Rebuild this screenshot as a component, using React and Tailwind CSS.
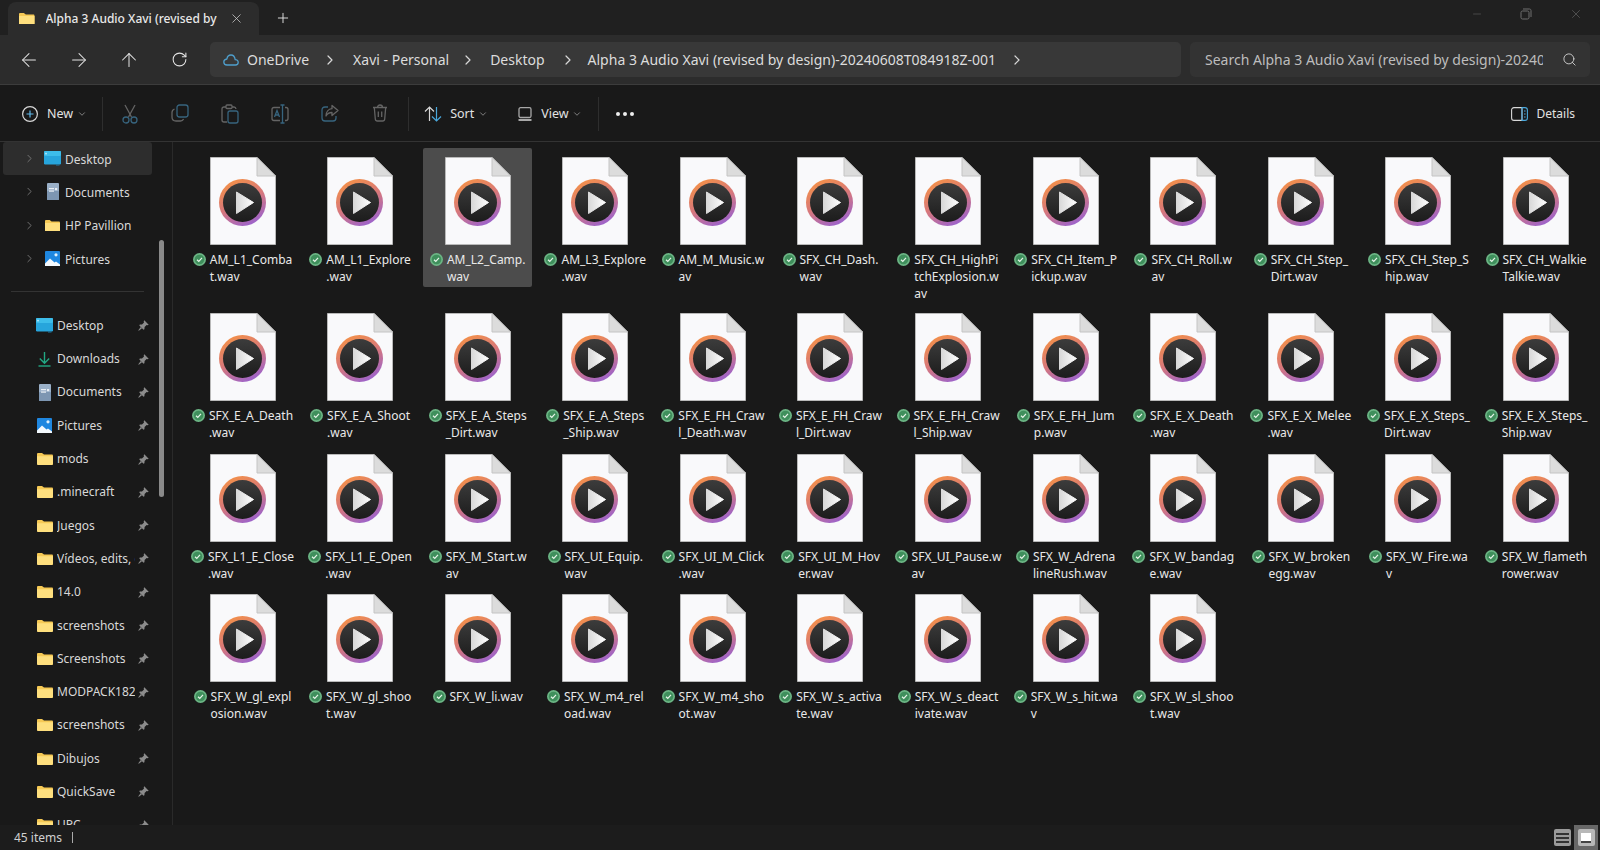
import React from "react";
import { ArrowLeft, ArrowRight, ArrowUp, RotateCw, ChevronRight, ChevronDown, Plus, X, Search, Minus } from "lucide-react";

const rows = [
  [["AM_L1_Comba","t.wav"],["AM_L1_Explore",".wav"],["AM_L2_Camp.","wav"],["AM_L3_Explore",".wav"],["AM_M_Music.w","av"],["SFX_CH_Dash.","wav"],["SFX_CH_HighPi","tchExplosion.w","av"],["SFX_CH_Item_P","ickup.wav"],["SFX_CH_Roll.w","av"],["SFX_CH_Step_","Dirt.wav"],["SFX_CH_Step_S","hip.wav"],["SFX_CH_Walkie","Talkie.wav"]],
  [["SFX_E_A_Death",".wav"],["SFX_E_A_Shoot",".wav"],["SFX_E_A_Steps","_Dirt.wav"],["SFX_E_A_Steps","_Ship.wav"],["SFX_E_FH_Craw","l_Death.wav"],["SFX_E_FH_Craw","l_Dirt.wav"],["SFX_E_FH_Craw","l_Ship.wav"],["SFX_E_FH_Jum","p.wav"],["SFX_E_X_Death",".wav"],["SFX_E_X_Melee",".wav"],["SFX_E_X_Steps_","Dirt.wav"],["SFX_E_X_Steps_","Ship.wav"]],
  [["SFX_L1_E_Close",".wav"],["SFX_L1_E_Open",".wav"],["SFX_M_Start.w","av"],["SFX_UI_Equip.","wav"],["SFX_UI_M_Click",".wav"],["SFX_UI_M_Hov","er.wav"],["SFX_UI_Pause.w","av"],["SFX_W_Adrena","lineRush.wav"],["SFX_W_bandag","e.wav"],["SFX_W_broken","egg.wav"],["SFX_W_Fire.wa","v"],["SFX_W_flameth","rower.wav"]],
  [["SFX_W_gl_expl","osion.wav"],["SFX_W_gl_shoo","t.wav"],["SFX_W_li.wav"],["SFX_W_m4_rel","oad.wav"],["SFX_W_m4_sho","ot.wav"],["SFX_W_s_activa","te.wav"],["SFX_W_s_deact","ivate.wav"],["SFX_W_s_hit.wa","v"],["SFX_W_sl_shoo","t.wav"]],
];

function FileIcon() {
  return (
    <svg width="66" height="88" viewBox="0 0 66 88" className="block shrink-0">
      <defs>
        <linearGradient id="ring" x1="0.2" y1="0" x2="0.7" y2="1">
          <stop offset="0" stopColor="#f59245" />
          <stop offset="0.5" stopColor="#d8787a" />
          <stop offset="1" stopColor="#9a62cf" />
        </linearGradient>
        <linearGradient id="disc" x1="0" y1="0" x2="0" y2="1">
          <stop offset="0" stopColor="#3c3c3c" />
          <stop offset="1" stopColor="#1c1c1c" />
        </linearGradient>
        <linearGradient id="tri" x1="0" y1="0" x2="1" y2="0">
          <stop offset="0" stopColor="#d8d8d8" />
          <stop offset="1" stopColor="#ffffff" />
        </linearGradient>
      </defs>
      <path d="M0.5 0.5H47L65.5 19V87.5H0.5Z" fill="#f9f9fb" stroke="#b9b9b9" strokeWidth="1" />
      <path d="M47 0.5V19H65.5Z" fill="#dcdcdc" stroke="#c4c4c4" strokeWidth="1" />
      <circle cx="32.5" cy="45.5" r="23.5" fill="url(#ring)" />
      <circle cx="32.5" cy="45.5" r="19.5" fill="url(#disc)" />
      <path d="M26.5 35V56.5L43.5 45.5Z" fill="url(#tri)" stroke="url(#tri)" strokeWidth="1" strokeLinejoin="round" />
    </svg>
  );
}

function Check() {
  return (
    <svg width="13" height="13" viewBox="0 0 13 13" className="shrink-0 mt-[2px]">
      <circle cx="6.5" cy="6.5" r="6.5" fill="#6cb585" />
      <circle cx="6.5" cy="6.5" r="4.8" fill="#3f8f5c" />
      <path d="M4 6.7L5.8 8.4L9 4.9" fill="none" stroke="#e8f5ea" strokeWidth="1.2" />
    </svg>
  );
}

function FileItem({ lines, selected }) {
  return (
    <div className={`self-start min-h-[139px] pt-[9px] flex flex-col items-center rounded-[2px] ${selected ? "bg-[#4c4c4c]" : ""}`}>
      <FileIcon />
      <div className="mt-[6px] flex gap-[4px] items-start justify-center">
        <Check />
        <div className="text-[12px] leading-[17px] text-[#e9e9e9] whitespace-nowrap text-left">
          {lines.map((l) => (
            <div key={l}>{l}</div>
          ))}
        </div>
      </div>
    </div>
  );
}

function Folder({ w = 16 }) {
  return (
    <svg width={w} height={w * 0.75} viewBox="0 0 16 12" className="block">
      <path d="M0 1.2C0 .5.5 0 1.2 0H5L7 1.6H14.8C15.5 1.6 16 2.1 16 2.8V10.8C16 11.5 15.5 12 14.8 12H1.2C.5 12 0 11.5 0 10.8Z" fill="#f6c955" />
      <path d="M0 3.2H16V10.8C16 11.5 15.5 12 14.8 12H1.2C.5 12 0 11.5 0 10.8Z" fill="#fedf7e" />
    </svg>
  );
}
function DesktopIco() {
  return (
    <svg width="17" height="15" viewBox="0 0 17 15" className="block">
      <rect width="17" height="13.5" rx="1.2" fill="#27a5dc" />
      <rect x="0" y="0" width="17" height="5" rx="1.2" fill="#3dbdea" />
      <rect x="1.4" y="1.8" width="1.2" height="1.6" fill="#e6f6fc" />
      <rect x="12" y="13.5" width="3.5" height="1" fill="#1c7aa6" />
    </svg>
  );
}
function DocIco() {
  return (
    <svg width="12" height="17" viewBox="0 0 12 17" className="block">
      <rect width="12" height="17" rx="1" fill="#9ab0c8" />
      <rect y="8" width="12" height="9" rx="1" fill="#7d96b2" />
      <rect x="2" y="5" width="5" height="1.2" fill="#e9eef4" />
      <rect x="2" y="7.5" width="5" height="1.2" fill="#e9eef4" />
      <rect x="8" y="5" width="2.2" height="2.2" fill="#e9eef4" />
    </svg>
  );
}
function PicIco() {
  return (
    <svg width="15" height="15" viewBox="0 0 15 15" className="block">
      <rect width="15" height="15" rx="1" fill="#1f87e0" />
      <path d="M0 15V12.5L5 7.5L9.5 11.5L11 10.5L15 13.5V15Z" fill="#f4f9fd" />
      <circle cx="11" cy="3.8" r="1.6" fill="#dff0fc" />
    </svg>
  );
}
function DownIco() {
  return (
    <svg width="13" height="15" viewBox="0 0 13 15" className="block" fill="none" stroke="#22a884" strokeWidth="1.4">
      <path d="M6.5 0V11M1.8 6.5L6.5 11.2L11.2 6.5" />
      <path d="M0.5 14H12.5" />
    </svg>
  );
}
function Pin() {
  return (
    <svg width="11" height="11" viewBox="0 0 11 11" className="block" fill="#8c8c8c">
      <path d="M6.3 0.3L10.7 4.7L9.7 5.3L8.6 5L6.6 7L6.4 9.2L5.5 9.7L1.3 5.5L1.8 4.6L4 4.4L6 2.4L5.7 1.3Z" />
      <path d="M2.8 7L0.3 10.2L0.8 10.7L4 8.2Z" />
    </svg>
  );
}

const topTree = [
  [<DesktopIco key="a" />, "Desktop"],
  [<DocIco key="b" />, "Documents"],
  [<Folder key="c" w={15} />, "HP Pavillion"],
  [<PicIco key="d" />, "Pictures"],
];
const pinned = [
  [<DesktopIco key="a" />, "Desktop"],
  [<DownIco key="b" />, "Downloads"],
  [<DocIco key="c" />, "Documents"],
  [<PicIco key="d" />, "Pictures"],
  ...["mods", ".minecraft", "Juegos", "Vídeos, edits, etc", "14.0", "screenshots", "Screenshots", "MODPACK1826", "screenshots", "Dibujos", "QuickSave", "UPC"].map((n) => [<Folder key={n} />, n]),
];

function Sidebar() {
  return (
    <div className="relative w-[173px] shrink-0 h-full overflow-hidden border-r border-[#2a2a2a]">
      <div className="pl-[3px] w-[152px]">
        {topTree.map(([ic, t], i) => (
          <div key={t} className={`h-[33.3px] flex items-center rounded-[3px] ${i === 0 ? "bg-[#2d2d2d]" : ""}`}>
            <ChevronRight size={13} strokeWidth={1.6} className="ml-[20px] text-[#7c7c7c]" />
            <div className="w-[17px] ml-[8px] flex justify-center">{ic}</div>
            <span className="ml-[4px] pt-[2px] text-[12px] text-[#d8d8d8] whitespace-nowrap">{t}</span>
          </div>
        ))}
      </div>
      <div className="ml-[11px] w-[133px] h-px bg-[#333] mt-[16px] mb-[17px]" />
      <div className="pl-[3px] w-[152px]">
        {pinned.map(([ic, t], i) => (
          <div key={i} className="h-[33.3px] flex items-center">
            <div className="w-[17px] ml-[33px] flex justify-center shrink-0">{ic}</div>
            <span className="ml-[4px] w-[78px] overflow-hidden text-[12px] text-[#d8d8d8] whitespace-nowrap">{t}</span>
            <div className="ml-[3px] shrink-0"><Pin /></div>
          </div>
        ))}
      </div>
      <div className="absolute left-[159px] top-[98px] w-[5px] h-[257px] rounded-full bg-[#8a8a8a]" />
    </div>
  );
}

const dim = "#646464";
const tint = "#37647e";
function CutI() {
  return (
    <svg width="18" height="20" viewBox="0 0 18 20" fill="none" strokeWidth="1.3">
      <path d="M4 1L10.5 13M14 1L7.5 13" stroke={dim} />
      <circle cx="5" cy="16" r="3" stroke={tint} />
      <circle cx="13" cy="16" r="3" stroke={tint} />
    </svg>
  );
}
function CopyI() {
  return (
    <svg width="18" height="18" viewBox="0 0 18 18" fill="none" strokeWidth="1.3">
      <rect x="6" y="1" width="11" height="12" rx="2.5" stroke={tint} />
      <path d="M3.5 5C2 5.6 1 6.6 1 8.5V13C1 15.5 2.5 17 5 17H9.5C11 17 12 16.2 12.6 15" stroke={dim} />
    </svg>
  );
}
function PasteI() {
  return (
    <svg width="18" height="20" viewBox="0 0 18 20" fill="none" strokeWidth="1.3">
      <path d="M5 3H3C1.8 3 1 3.8 1 5V16C1 17.2 1.8 18 3 18H6" stroke={dim} />
      <path d="M11 3H13C14 3 14.8 3.8 15 5" stroke={dim} />
      <rect x="5" y="1" width="6" height="3.5" rx="1" stroke={dim} />
      <rect x="7" y="7" width="10" height="12" rx="2" stroke={tint} />
    </svg>
  );
}
function RenameI() {
  return (
    <svg width="18" height="20" viewBox="0 0 18 20" fill="none" strokeWidth="1.3">
      <path d="M9 3.5H3C1.8 3.5 1 4.3 1 5.5V14.5C1 15.7 1.8 16.5 3 16.5H9" stroke={dim} />
      <path d="M14 3.5H15C16.2 3.5 17 4.3 17 5.5V14.5C17 15.7 16.2 16.5 15 16.5H14" stroke={dim} />
      <path d="M11.5 1V19M9.5 1H13.5M9.5 19H13.5" stroke={tint} />
      <path d="M3.5 13L6 6.5L8.5 13M4.5 11H7.5" stroke={tint} />
    </svg>
  );
}
function ShareI() {
  return (
    <svg width="18" height="18" viewBox="0 0 18 18" fill="none" strokeWidth="1.3">
      <path d="M7 3H4C2.2 3 1 4.2 1 6V14C1 15.8 2.2 17 4 17H12C13.8 17 15 15.8 15 14V12" stroke={tint} />
      <path d="M11 1.5L17 6.5L11 11.5V8.5C8 8.5 6 10 5 12C5 8 7.5 5 11 4.7Z" stroke={dim} strokeLinejoin="round" />
    </svg>
  );
}
function TrashI() {
  return (
    <svg width="16" height="18" viewBox="0 0 16 18" fill="none" strokeWidth="1.3" stroke={dim}>
      <path d="M1 3.5H15M5.5 3.5C5.5 2 6.5 1 8 1S10.5 2 10.5 3.5" />
      <path d="M2.3 3.5L3.3 15C3.4 16.2 4.2 17 5.4 17H10.6C11.8 17 12.6 16.2 12.7 15L13.7 3.5" />
      <path d="M6.3 7.5V13M9.7 7.5V13" />
    </svg>
  );
}
function SortI() {
  return (
    <svg width="18" height="16" viewBox="0 0 18 16" fill="none" strokeWidth="1.2">
      <path d="M5.5 15V1M1 5.5L5.5 1L10 5.5" stroke="#d8d8d8" />
      <path d="M12.5 1V15M8 10.5L12.5 15L17 10.5" stroke="#4aa8dc" />
    </svg>
  );
}
function ViewI() {
  return (
    <svg width="14" height="14" viewBox="0 0 14 14" fill="none" strokeWidth="1.3" stroke="#a8a8a8">
      <rect x="1" y="0.7" width="12" height="9.8" rx="1.5" />
      <path d="M0.5 13H13.5" strokeWidth="2" />
    </svg>
  );
}
function NewI() {
  return (
    <svg width="16" height="16" viewBox="0 0 16 16" fill="none" strokeWidth="1.2">
      <circle cx="8" cy="8" r="7.4" stroke="#d8d8d8" />
      <path d="M8 4.5V11.5M4.5 8H11.5" stroke="#60b8ea" />
    </svg>
  );
}
function DetailsI() {
  return (
    <svg width="17" height="14" viewBox="0 0 17 14" fill="none" strokeWidth="1.1">
      <path d="M11 .6H3C1.6.6.6 1.6.6 3V11C.6 12.4 1.6 13.4 3 13.4H11Z" stroke="#d8d8d8" />
      <path d="M11 .6H14C15.4.6 16.4 1.6 16.4 3V11C16.4 12.4 15.4 13.4 14 13.4H11Z" stroke="#4aa8dc" />
      <path d="M13 4H14.6M13 7H14.6M13 10H14.6" stroke="#4aa8dc" />
    </svg>
  );
}
function CloudI() {
  return (
    <svg width="16" height="12" viewBox="0 0 16 12" fill="none" stroke="#4f9ecb" strokeWidth="1.3">
      <path d="M4 11H12.5C14 11 15.2 9.8 15.2 8.3C15.2 6.8 14 5.6 12.5 5.6H12.2C11.8 3 10 1 8 1C5.8 1 4.2 2.8 3.9 5C2.2 5.2 .8 6.4 .8 8C.8 9.7 2.2 11 4 11Z" strokeLinejoin="round" />
    </svg>
  );
}

function Crumb({ children }) {
  return <span className="text-[#dcdcdc] whitespace-nowrap">{children}</span>;
}
function CrumbSep({ className }) {
  return <ChevronRight size={16} strokeWidth={1.8} className={`text-[#d8d8d8] shrink-0 ${className}`} />;
}

function Titlebar() {
  return (
    <div className="h-[35px] bg-[#202020] flex items-end shrink-0 relative">
      <div className="ml-[8px] w-[251px] h-[33px] bg-[#2c2c2c] rounded-t-[8px] flex items-center">
        <div className="ml-[11px]"><Folder w={15.5} /></div>
        <span className="ml-[11px] w-[171px] overflow-hidden whitespace-nowrap text-[12px] font-medium text-[#e8e8e8]">Alpha 3 Audio Xavi (revised by design)-20240608T084918Z-001</span>
        <X size={15} strokeWidth={1.2} className="ml-[12px] text-[#cfcfcf]" />
      </div>
      <Plus size={16} strokeWidth={1.4} className="ml-[16px] mb-[9px] text-[#e4e4e4]" />
      <div className="ml-auto flex items-center gap-[37px] mr-[17px] mb-[14px] text-[#6e6e6e]">
        <Minus size={12} strokeWidth={1} />
        <svg width="12" height="12" viewBox="0 0 12 12" fill="none" stroke="#6e6e6e" strokeWidth="1"><rect x="1" y="3" width="8" height="8" rx="1.5" /><path d="M3 1H9.5C10.4 1 11 1.6 11 2.5V9" /></svg>
        <X size={14} strokeWidth={1} />
      </div>
    </div>
  );
}

function Navbar() {
  return (
    <div className="h-[50px] bg-[#2c2c2c] border-b border-[#3c3c3c] flex items-center shrink-0 pl-[4px] pr-[10px]">
      {[ArrowLeft, ArrowRight, ArrowUp, RotateCw].map((I, i) => (
        <div key={i} className="w-[50px] flex justify-center">
          <I size={i === 3 ? 17 : 22} strokeWidth={i === 3 ? 1.5 : 1.1} className="text-[#e4e4e4]" />
        </div>
      ))}
      <div className="w-[971px] ml-[6px] h-[35px] bg-[#383838] rounded-[5px] flex items-center text-[14px]">
        <div className="ml-[13px]"><CloudI /></div>
        <div className="ml-[8px]"><Crumb>OneDrive</Crumb></div>
        <CrumbSep className="ml-[13px]" />
        <div className="ml-[15px]"><Crumb>Xavi - Personal</Crumb></div>
        <CrumbSep className="ml-[11px]" />
        <div className="ml-[14px]"><Crumb>Desktop</Crumb></div>
        <CrumbSep className="ml-[15px]" />
        <div className="ml-[12px]"><Crumb>Alpha 3 Audio Xavi (revised by design)-20240608T084918Z-001</Crumb></div>
        <CrumbSep className="ml-[13px]" />
      </div>
      <div className="w-[400px] ml-[9px] h-[35px] bg-[#333333] rounded-[5px] flex items-center text-[14px]">
        <span className="ml-[15px] w-[338px] overflow-hidden whitespace-nowrap text-[#bdbdbd]">Search Alpha 3 Audio Xavi (revised by design)-20240608T084918Z-001</span>
        <Search size={15} strokeWidth={1.4} className="ml-[19px] text-[#d8d8d8]" />
      </div>
    </div>
  );
}

function Sep() {
  return <div className="w-px h-[34px] bg-[#2e2e2e]" />;
}
function Toolbar() {
  return (
    <div className="h-[57px] bg-[#191919] border-b border-[#333] flex items-center shrink-0 pl-[22px] pt-[2px] text-[12.5px] text-[#e2e2e2]">
      <NewI />
      <span className="ml-[9px]">New</span>
      <ChevronDown size={10} strokeWidth={1.5} className="ml-[4px] text-[#bbb]" />
      <div className="ml-[15px]"><Sep /></div>
      <div className="flex ml-[2px]">
        {[CutI, CopyI, PasteI, RenameI, ShareI, TrashI].map((I, i) => (
          <div key={i} className="w-[50px] flex justify-center"><I /></div>
        ))}
      </div>
      <div className="ml-[3px]"><Sep /></div>
      <div className="ml-[15px]"><SortI /></div>
      <span className="ml-[8px]">Sort</span>
      <ChevronDown size={10} strokeWidth={1.5} className="ml-[4px] text-[#bbb]" />
      <div className="ml-[30px]"><ViewI /></div>
      <span className="ml-[9px]">View</span>
      <ChevronDown size={10} strokeWidth={1.5} className="ml-[3px] text-[#bbb]" />
      <div className="ml-[16px]"><Sep /></div>
      <div className="ml-[17px] flex gap-[3px]">
        <span className="w-[4px] h-[4px] rounded-full bg-[#eee]" />
        <span className="w-[4px] h-[4px] rounded-full bg-[#eee]" />
        <span className="w-[4px] h-[4px] rounded-full bg-[#eee]" />
      </div>
      <div className="ml-auto mr-[25px] flex items-center gap-[8px]">
        <DetailsI />
        <span className="text-[12px]">Details</span>
      </div>
    </div>
  );
}

export default function App() {
  let idx = 0;
  return (
    <div className="w-[1600px] h-[850px] overflow-hidden flex flex-col bg-[#191919]" style={{ fontFamily: '"Noto Sans", "Open Sans", sans-serif' }}>
      <Titlebar />
      <Navbar />
      <Toolbar />
      <div className="flex-1 min-h-0 flex">
        <Sidebar />
        <div className="flex-1 pl-[15px] pt-[6px]">
          <div className="grid grid-cols-[repeat(12,109px)] gap-x-[8.6px] grid-rows-[156px_141px_140px_140px]">
            {rows.flat().map((lines) => {
              const i = idx++;
              return <FileItem key={i} lines={lines} selected={i === 2} />;
            })}
          </div>
        </div>
      </div>
      <div className="h-[25px] shrink-0 bg-[#1c1c1c] flex items-center text-[12px] text-[#d0d0d0] relative">
        <span className="ml-[14px] pt-[1px]">45 items</span>
        <div className="ml-[10px] w-px h-[11px] bg-[#aaa]" />
        <div className="ml-auto flex items-center">
          <div className="w-[17px] h-[17px] rounded-[2px] bg-[#9a9a9a] flex flex-col justify-center gap-[2px] px-[2px] mr-[3px]">
            <div className="h-[2px] bg-[#333]" />
            <div className="h-[2px] bg-[#333]" />
            <div className="h-[2px] bg-[#333]" />
          </div>
          <div className="w-[24px] h-[25px] bg-[#686868] flex items-center justify-center mr-[2px]">
            <div className="w-[17px] h-[17px] rounded-[2px] bg-[#b8b8b8] flex items-center justify-center">
              <div className="w-[10px] h-[10px] bg-white border-b-2 border-[#444]" />
            </div>
          </div>
        </div>
      </div>
    </div>
  );
}
